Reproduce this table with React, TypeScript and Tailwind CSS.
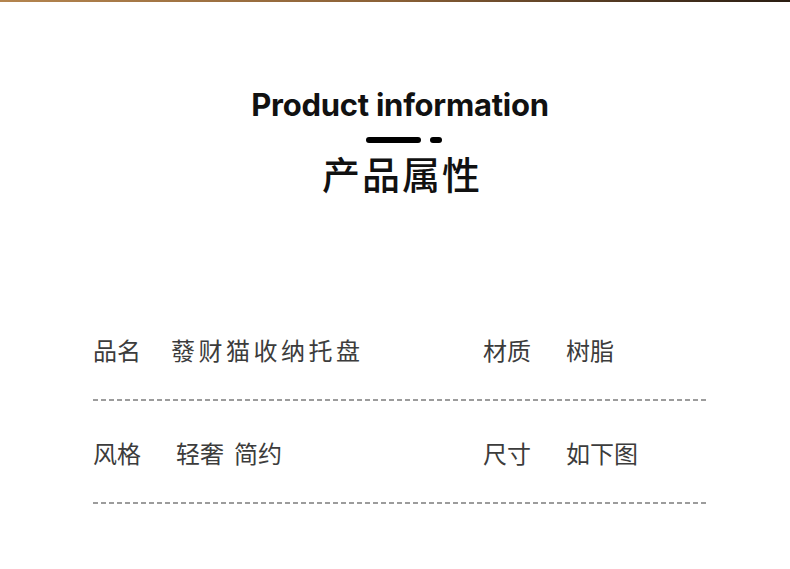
import React from "react";

type Cell = { label: string; value: React.ReactNode; cls?: string };

const rows: Cell[][] = [
  [
    { label: "品名", value: "蕟财猫收纳托盘", cls: "tracking-[3.5px]" },
    { label: "材质", value: "树脂" },
  ],
  [
    {
      label: "风格",
      value: (
        <>
          轻奢<span className="ml-[10px]">简约</span>
        </>
      ),
      cls: "ml-[5px]",
    },
    { label: "尺寸", value: "如下图" },
  ],
];

const App: React.FC = () => {
  return (
    <div
      className="w-[790px] h-[569px] bg-white overflow-hidden flex flex-col"
      style={{ fontFamily: '"Noto Sans", "Noto Sans CJK SC", sans-serif' }}
    >
      {/* Top wood strip */}
      <div className="h-[2px] w-full bg-gradient-to-r from-[#b4854f] via-[#8a6036] to-[#2a1d12]" />

      {/* Heading */}
      <div className="flex flex-col items-center ml-[10px] mt-[84px]">
        <h1 className="font-[Inter,sans-serif] font-bold text-[31px] leading-[38px] tracking-[-0.25px] text-[#111]">
          Product information
        </h1>
        <div className="flex items-center gap-[9px] mt-[13px] ml-[8px]">
          <span className="block w-[55px] h-[6px] rounded-full bg-black" />
          <span className="block w-[12px] h-[6px] rounded-full bg-black" />
        </div>
        <h2 className="mt-[6px] ml-[4px] text-[38px] leading-[48px] font-medium text-[#111] font-['Noto_Sans_CJK_SC',sans-serif] tracking-[2px]">
          产品属性
        </h2>
      </div>

      {/* Attribute table */}
      <div className="ml-[93px] w-[614px] mt-[131px] flex flex-col">
        {rows.map((row, i) => (
          <div key={i} className="flex flex-col">
            <div className="flex h-[44px] items-center text-[24px] text-[#3c3c3c] font-['Noto_Sans_CJK_SC',sans-serif]">
              {row.map((cell, j) => (
                <div key={j} className={`flex items-center ${j === 0 ? "w-[390px]" : "flex-1"}`}>
                  <span className={j === 0 ? "w-[78px]" : "w-[83px]"}>{cell.label}</span>
                  <span className={cell.cls ?? ""}>{cell.value}</span>
                </div>
              ))}
            </div>
            <div className="mt-[27px] mb-[30px] h-[2px] bg-[repeating-linear-gradient(90deg,#9c9c9c_0_5px,transparent_5px_8px)]" />
          </div>
        ))}
      </div>
    </div>
  );
};

export default App;
